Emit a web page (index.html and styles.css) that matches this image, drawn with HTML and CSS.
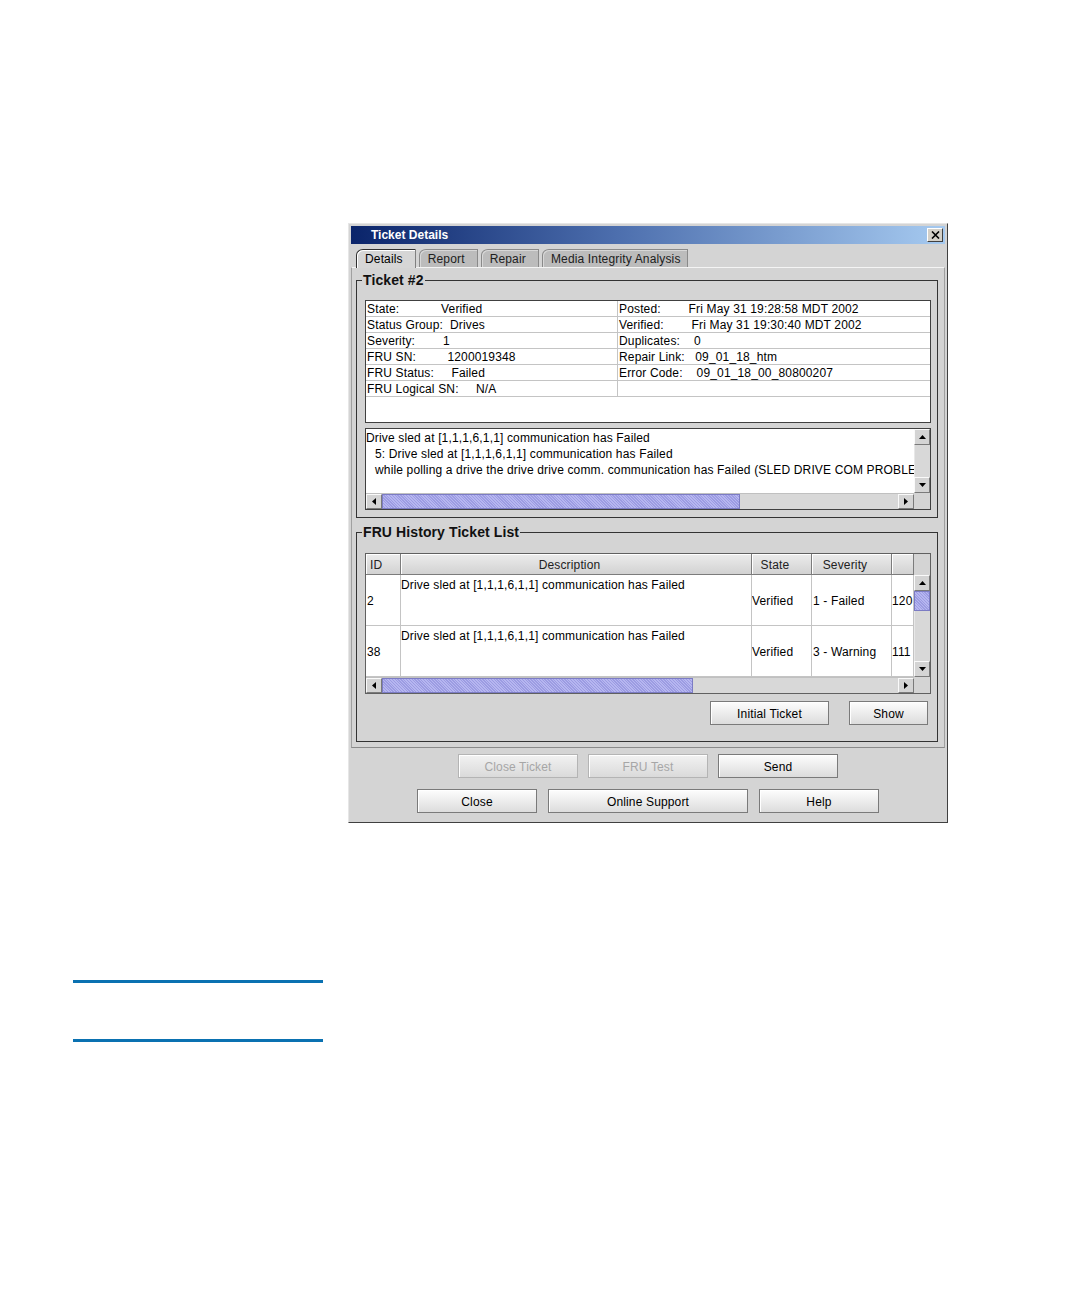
FILE: index.html
```html
<!DOCTYPE html>
<html>
<head>
<meta charset="utf-8">
<link rel="stylesheet" href="styles.css">
</head>
<body>
<div class="page">
  <div class="dialog">
    <div class="titlebar">
      <span class="ttl">Ticket Details</span>
      <span class="xbtn"><svg width="9" height="8" viewBox="0 0 9 8"><path d="M1 0.5L8 7.5M8 0.5L1 7.5" stroke="#000" stroke-width="1.6" fill="none"/></svg></span>
    </div>
    <div class="tabs">
      <div class="tab sel">Details</div>
      <div class="tab">Report</div>
      <div class="tab">Repair</div>
      <div class="tab last">Media Integrity Analysis</div>
    </div>
    <div class="panel">
      <fieldset class="group">
        <legend>Ticket #2</legend>
        <div class="info">
          <div class="c l">State:            Verified</div>
          <div class="c r">Posted:        Fri May 31 19:28:58 MDT 2002</div>
          <div class="c l">Status Group:  Drives</div>
          <div class="c r">Verified:        Fri May 31 19:30:40 MDT 2002</div>
          <div class="c l">Severity:        1</div>
          <div class="c r">Duplicates:    0</div>
          <div class="c l">FRU SN:         1200019348</div>
          <div class="c r">Repair Link:   09_01_18_htm</div>
          <div class="c l">FRU Status:     Failed</div>
          <div class="c r">Error Code:    09_01_18_00_80800207</div>
          <div class="c l">FRU Logical SN:     N/A</div>
          <div class="c r"></div>
        </div>
        <div class="ta">
          <div class="ta-text"><div>Drive sled at [1,1,1,6,1,1] communication has Failed</div><div class="ind">5: Drive sled at [1,1,1,6,1,1] communication has Failed</div><div class="ind">while polling a drive the drive drive comm. communication has Failed (SLED DRIVE COM PROBLEM)</div></div>
          <div class="vbar">
            <div class="arr"><svg width="7" height="4" viewBox="0 0 7 4"><path d="M0 4L3.5 0L7 4Z"/></svg></div>
            <div class="track"></div>
            <div class="arr"><svg width="7" height="4" viewBox="0 0 7 4"><path d="M0 0L3.5 4L7 0Z"/></svg></div>
          </div>
          <div class="hbar">
            <div class="arr"><svg width="4" height="7" viewBox="0 0 4 7"><path d="M4 0L0 3.5L4 7Z"/></svg></div>
            <div class="thumb th-ta"></div>
            <div class="track"></div>
            <div class="arr"><svg width="4" height="7" viewBox="0 0 4 7"><path d="M0 0L4 3.5L0 7Z"/></svg></div>
          </div>
          <div class="corner"></div>
        </div>
      </fieldset>
      <fieldset class="group fru">
        <legend>FRU History Ticket List</legend>
        <div class="tbl">
          <div class="th left">ID</div>
          <div class="th">Description</div>
          <div class="th">State</div>
          <div class="th">Severity</div>
          <div class="th"></div>
          <div class="hcorner"></div>

          <div class="td mid idc">2</div>
          <div class="td top">Drive sled at [1,1,1,6,1,1] communication has Failed</div>
          <div class="td mid">Verified</div>
          <div class="td mid sev">1 - Failed</div>
          <div class="td mid">120</div>
          <div class="vbar tv">
            <div class="arr"><svg width="7" height="4" viewBox="0 0 7 4"><path d="M0 4L3.5 0L7 4Z"/></svg></div>
            <div class="thumb th-v"></div>
            <div class="track"></div>
            <div class="arr"><svg width="7" height="4" viewBox="0 0 7 4"><path d="M0 0L3.5 4L7 0Z"/></svg></div>
          </div>

          <div class="td mid idc">38</div>
          <div class="td top">Drive sled at [1,1,1,6,1,1] communication has Failed</div>
          <div class="td mid">Verified</div>
          <div class="td mid sev">3 - Warning</div>
          <div class="td mid">111</div>

          <div class="hbar th-span">
            <div class="arr"><svg width="4" height="7" viewBox="0 0 4 7"><path d="M4 0L0 3.5L4 7Z"/></svg></div>
            <div class="thumb th-tb"></div>
            <div class="track"></div>
            <div class="arr"><svg width="4" height="7" viewBox="0 0 4 7"><path d="M0 0L4 3.5L0 7Z"/></svg></div>
          </div>
          <div class="corner"></div>
        </div>
        <div class="grp-btns">
          <div class="btn w119">Initial Ticket</div>
          <div class="btn w79">Show</div>
        </div>
      </fieldset>
    </div>
    <div class="brow r1">
      <div class="btn w120 dis">Close Ticket</div>
      <div class="btn w120 dis">FRU Test</div>
      <div class="btn w120">Send</div>
    </div>
    <div class="brow r2">
      <div class="btn w120">Close</div>
      <div class="btn w200">Online Support</div>
      <div class="btn w120">Help</div>
    </div>
  </div>
  <div class="rule r-a"></div>
  <div class="rule r-b"></div>
</div>
</body>
</html>
```

FILE: styles.css
```css
* { box-sizing: border-box; }
html, body { margin: 0; padding: 0; background: #fff; }
body {
  font-family: "Liberation Sans", Arial, sans-serif;
  font-size: 12px;
  letter-spacing: 0.15px;
  color: #000;
}
.page {
  width: 1080px;
  height: 1296px;
  padding-top: 223px;
  overflow: hidden;
}
.dialog {
  margin-left: 348px;
  width: 600px;
  height: 600px;
  background: #d4d4d4;
  border: 1px solid;
  border-color: #e6e6e6 #404040 #404040 #e6e6e6;
  padding: 2px;
  display: flex;
  flex-direction: column;
}
.titlebar {
  height: 18px;
  flex: none;
  background: linear-gradient(to right, #0a246a 0%, #4d6fae 45%, #a6caf0 100%);
  display: flex;
  align-items: center;
  padding-left: 20px;
  color: #fff;
  font-weight: bold;
  font-size: 12px;
  letter-spacing: 0;
}
.ttl { flex: 1; }
.xbtn {
  width: 16px;
  height: 14px;
  margin-right: 2px;
  background: #d4d0c8;
  border: 1px solid;
  border-color: #fff #404040 #404040 #fff;
  display: flex;
  align-items: center;
  justify-content: center;
}
.tabs {
  display: flex;
  align-items: flex-end;
  margin-top: 5px;
  padding-left: 5px;
  height: 18px;
  flex: none;
}
.tab {
  height: 18px;
  line-height: 16px;
  padding: 1px 12px 0 8px;
  margin-right: 3px;
  background: #bcbcbc;
  border: 1px solid #8a8a8a;
  border-bottom: none;
  border-top-left-radius: 7px 6px;
  color: #202020;
  box-shadow: inset 1px 1px 0 #d8d8d8;
}
.tab.last { padding-right: 6px; }
.tab.sel {
  height: 19px;
  margin-bottom: -1px;
  background: #d6d6d6;
  border-color: #303030 #808080 #d6d6d6 #303030;
  box-shadow: inset 1px 1px 0 #fff;
  position: relative;
  z-index: 1;
  color: #000;
}
.panel {
  flex: none;
  height: 481px;
  border: 1px solid;
  border-color: #f4f4f4 #a0a0a0 #8a8a8a #a0a0a0;
  padding: 0 6px 0 4px;
}
.group {
  margin: 5px 0 0;
  padding: 0 0 7px;
  border: 1px solid #333;
  min-width: 0;
}
.group legend {
  font-weight: bold;
  font-size: 14px;
  line-height: 14px;
  padding: 0 1px;
  margin-left: 5px;
  color: #111;
  letter-spacing: 0.1px;
}
.group.fru {
  margin-top: 7px;
  padding-bottom: 16px;
}
.info {
  margin: 13px 6px 0 8px;
  height: 123px;
  border: 1px solid #404040;
  background: #fff;
  display: grid;
  grid-template-columns: 252px 1fr;
  grid-auto-rows: 16px;
  align-content: start;
}
.info .c {
  border-bottom: 1px solid #c4c4c4;
  line-height: 15px;
  padding-top: 1px;
  white-space: pre;
  overflow: hidden;
}
.info .l { border-right: 1px solid #c4c4c4; padding-left: 1px; }
.info .r { padding-left: 1px; }
.ta {
  margin: 5px 6px 0 8px;
  height: 82px;
  border: 1px solid #404040;
  background: #fff;
  display: grid;
  grid-template-columns: 1fr 16px;
  grid-template-rows: 1fr 16px;
}
.ta-text {
  padding-top: 1px;
  line-height: 16px;
  white-space: pre;
  overflow: hidden;
}
.ta-text .ind { padding-left: 9px; }
.vbar {
  display: flex;
  flex-direction: column;
  background: #d6d6d6;
}
.hbar {
  display: flex;
  background: #d6d6d6;
  border-top: 1px solid #c0c0c0;
}
.arr {
  flex: none;
  width: 16px;
  height: 16px;
  background: #d4d4d4;
  border: 1px solid;
  border-color: #fafafa #7a7a7a #7a7a7a #fafafa;
  display: flex;
  align-items: center;
  justify-content: center;
}
.hbar .arr { height: 15px; }
.track {
  flex: 1;
  background: #d8d8d8;
}
.vbar .track { border-left: 1px solid #e8e8e8; }
.thumb {
  flex: none;
  background: repeating-linear-gradient(45deg, #b6b6f0 0 1px, #9c9ce2 1px 2px);
  border: 1px solid #7c7cc4;
}
.th-ta { width: 358px; }
.th-tb { width: 311px; }
.th-v { height: 20px; }
.corner { background: #d4d4d4; }
.tbl {
  margin: 14px 6px 0 8px;
  height: 141px;
  border: 1px solid #606060;
  background: #d4d4d4;
  display: grid;
  grid-template-columns: 35px 351px 60px 80px 22px 16px;
  grid-template-rows: 21px 51px 51px 16px;
}
.th {
  background: linear-gradient(#ececec, #d2d2d2);
  border-right: 1px solid #7c7c7c;
  border-bottom: 1px solid #7c7c7c;
  box-shadow: inset 1px 1px 0 #fff;
  display: flex;
  align-items: center;
  justify-content: center;
  color: #222;
  padding: 2px 13px 0 0;
}
.th.left { justify-content: flex-start; padding-left: 4px; padding-right: 0; }
.hcorner { background: #d4d4d4; }
.td {
  background: #fff;
  border-right: 1px solid #c4c4c4;
  border-bottom: 1px solid #c4c4c4;
  white-space: nowrap;
  overflow: hidden;
  display: flex;
  line-height: 15px;
}
.td.mid { align-items: center; padding-top: 2px; }
.td.top { align-items: flex-start; padding-top: 3px; }
.td.idc { padding-left: 1px; }
.td.sev { padding-left: 1px; }
.tv { grid-row: 2 / span 2; grid-column: 6; }
.th-span { grid-column: 1 / span 5; }
.grp-btns {
  display: flex;
  justify-content: flex-end;
  gap: 20px;
  margin: 7px 9px 0 0;
}
.btn {
  height: 24px;
  border: 1px solid #7a7a7a;
  background: linear-gradient(#fdfdfd, #dcdcdc);
  display: flex;
  align-items: center;
  justify-content: center;
  color: #000;
  box-shadow: inset 1px 1px 0 #fff;
  padding-top: 1px;
}
.btn.dis {
  color: #a6a6a6;
  border-color: #b4b4b4;
  background: linear-gradient(#f2f2f2, #dadada);
}
.w79 { width: 79px; }
.w119 { width: 119px; }
.w120 { width: 120px; }
.w200 { width: 200px; }
.brow {
  display: flex;
  justify-content: center;
  gap: 10px;
  flex: none;
}
.brow.r1 { margin-top: 6px; }
.brow.r2 { margin-top: 11px; gap: 11px; }
.rule {
  margin-left: 73px;
  width: 250px;
  height: 3px;
  background: #0a71b1;
}
.r-a { margin-top: 157px; }
.r-b { margin-top: 56px; }
```
